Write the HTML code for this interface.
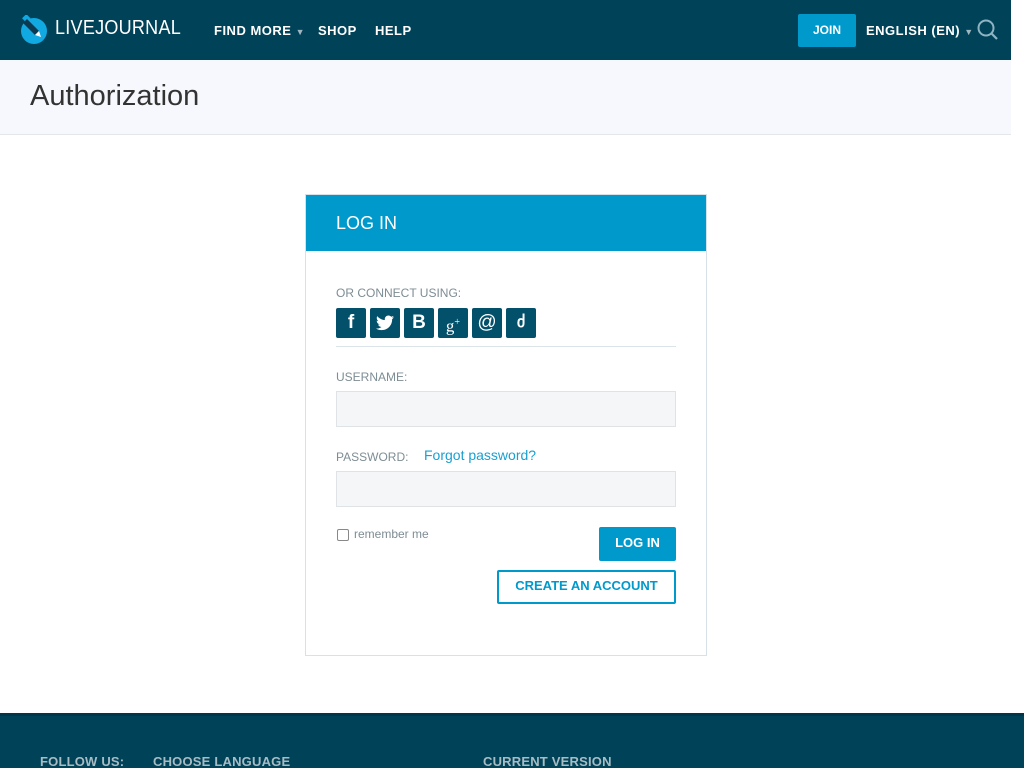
<!DOCTYPE html>
<html><head><meta charset="utf-8"><style>
*{box-sizing:border-box;margin:0;padding:0}
body{width:1024px;height:768px;overflow:hidden;background:#fff;font-family:"Liberation Sans",sans-serif;position:relative}
.hdr{position:absolute;left:0;top:0;width:1011px;height:60px;background:#004359;color:#fff}
.hdr .t{position:absolute;top:23px;font-size:13px;font-weight:bold;letter-spacing:.5px}
.sub{position:absolute;left:0;top:60px;width:1011px;height:75px;background:#f7f8fd;border-bottom:1px solid #e3e6ea}
.sub h1{position:absolute;left:30px;top:20px;font-size:29px;font-weight:normal;color:#333}
.box{position:absolute;left:305px;top:194px;width:402px;height:462px;border:1px solid #d6e2e8}
.bh{height:56px;background:#0099cc;color:#fff;font-size:18px;padding:18px 30px}
.lbl{position:absolute;left:30px;font-size:12px;color:#7d8d94}
.inp{position:absolute;left:30px;width:340px;height:36px;background:#f5f6f8;border:1px solid #dfe3e6}
.soc{position:absolute;top:113px;width:30px;height:30px;background:#03506b;border-radius:2px;color:#fff;text-align:center;line-height:30px;font-weight:bold;font-size:19px}
.ftr{position:absolute;left:0;top:713px;width:1024px;height:55px;background:#004359;border-top:3px solid #00354a}
.ftr span{position:absolute;top:38px;font-size:13px;font-weight:bold;color:#a8bcc4;letter-spacing:.2px}
</style></head><body>
<div class="hdr">
<svg style="position:absolute;left:19px;top:15px" width="30" height="30" viewBox="0 0 30 30"><circle cx="15" cy="16" r="13" fill="#10a9e2"/><rect x="4" y="1" width="8" height="6" fill="#10a9e2" transform="rotate(45 8 4)"/><path d="M8 4 L20 16 L16 20 L4 8 Z" fill="#0e3a50"/><path d="M20 16 L22 22 L16 20 Z" fill="#fff"/></svg>
<span class="t" style="left:55px;top:17px;font-size:20px;font-weight:normal;letter-spacing:.3px;transform:scaleX(.9);transform-origin:left">LIVEJOURNAL</span>
<span class="t" style="left:214px">FIND MORE <span style="font-size:9px;color:#9fb5bf">▼</span></span>
<span class="t" style="left:318px">SHOP</span>
<span class="t" style="left:375px">HELP</span>
<div style="position:absolute;left:798px;top:14px;width:58px;height:33px;background:#0099cc;border-radius:2px;font-size:12px;font-weight:bold;text-align:center;line-height:33px">JOIN</div>
<span class="t" style="left:866px">ENGLISH (EN) <span style="font-size:9px;color:#9fb5bf">▼</span></span>
<svg style="position:absolute;left:977px;top:19px" width="22" height="22" viewBox="0 0 22 22"><circle cx="9" cy="9" r="7.5" fill="none" stroke="#8fb3c2" stroke-width="2"/><path d="M14.5 14.5 L20 20" stroke="#8fb3c2" stroke-width="2.2"/></svg>
</div>
<div class="sub"><h1>Authorization</h1></div>
<div class="box">
<div class="bh">LOG IN</div>
<div class="lbl" style="top:91px">OR CONNECT USING:</div>
<div class="soc" style="left:30px">f</div>
<div class="soc" style="left:64px"><svg style="margin-top:7px" width="18" height="16" viewBox="0 0 24 20"><path fill="#fff" d="M24 2.4c-.9.4-1.8.6-2.8.8 1-.6 1.8-1.6 2.200-2.7-1 .6-2 1-3.1 1.2C19.4.7 18.1 0 16.6 0c-2.7 0-4.900 2.200-4.900 4.900 0 .4 0 .8.1 1.1C7.7 5.8 4.1 3.9 1.7.9c-.4.7-.7 1.6-.7 2.5 0 1.7.9 3.2 2.2 4.1-.8 0-1.6-.2-2.2-.6v.1c0 2.4 1.7 4.4 3.9 4.8-.4.1-.8.2-1.3.2-.3 0-.6 0-.9-.1.6 2 2.4 3.4 4.6 3.4-1.7 1.3-3.8 2.1-6.1 2.1-.4 0-.8 0-1.2-.1 2.2 1.4 4.8 2.2 7.5 2.2 9.1 0 14-7.5 14-14v-.6c1-.7 1.8-1.6 2.5-2.5z"/></svg></div>
<div class="soc" style="left:98px">B</div>
<div class="soc" style="left:132px;font-family:'Liberation Serif',serif;font-weight:normal;font-size:17px">g<sup style="font-size:10px">+</sup></div>
<div class="soc" style="left:166px;font-weight:normal">@</div>
<div class="soc" style="left:200px;font-size:16px">ძ</div>
<div style="position:absolute;left:30px;top:151px;width:340px;height:1px;background:#dbe4e8"></div>
<div class="lbl" style="top:175px">USERNAME:</div>
<div class="inp" style="top:196px"></div>
<div class="lbl" style="top:255px">PASSWORD:</div>
<div style="position:absolute;left:118px;top:252px;font-size:14px;color:#1a9fd0">Forgot password?</div>
<div class="inp" style="top:276px"></div>
<div style="position:absolute;left:31px;top:334px;width:12px;height:12px;border:1px solid #888;border-radius:2px"></div>
<div class="lbl" style="left:48px;top:332px;font-size:12px">remember me</div>
<div style="position:absolute;left:293px;top:332px;width:77px;height:34px;background:#0099cc;border-radius:2px;color:#fff;font-size:13px;font-weight:bold;text-align:center;line-height:32px">LOG IN</div>
<div style="position:absolute;left:191px;top:375px;width:179px;height:34px;border:2px solid #0099cc;border-radius:2px;color:#0099cc;font-size:13px;font-weight:bold;text-align:center;line-height:28px">CREATE AN ACCOUNT</div>
</div>
<div class="ftr"><span style="left:40px">FOLLOW US:</span><span style="left:153px">CHOOSE LANGUAGE</span><span style="left:483px">CURRENT VERSION</span></div>
</body></html>
